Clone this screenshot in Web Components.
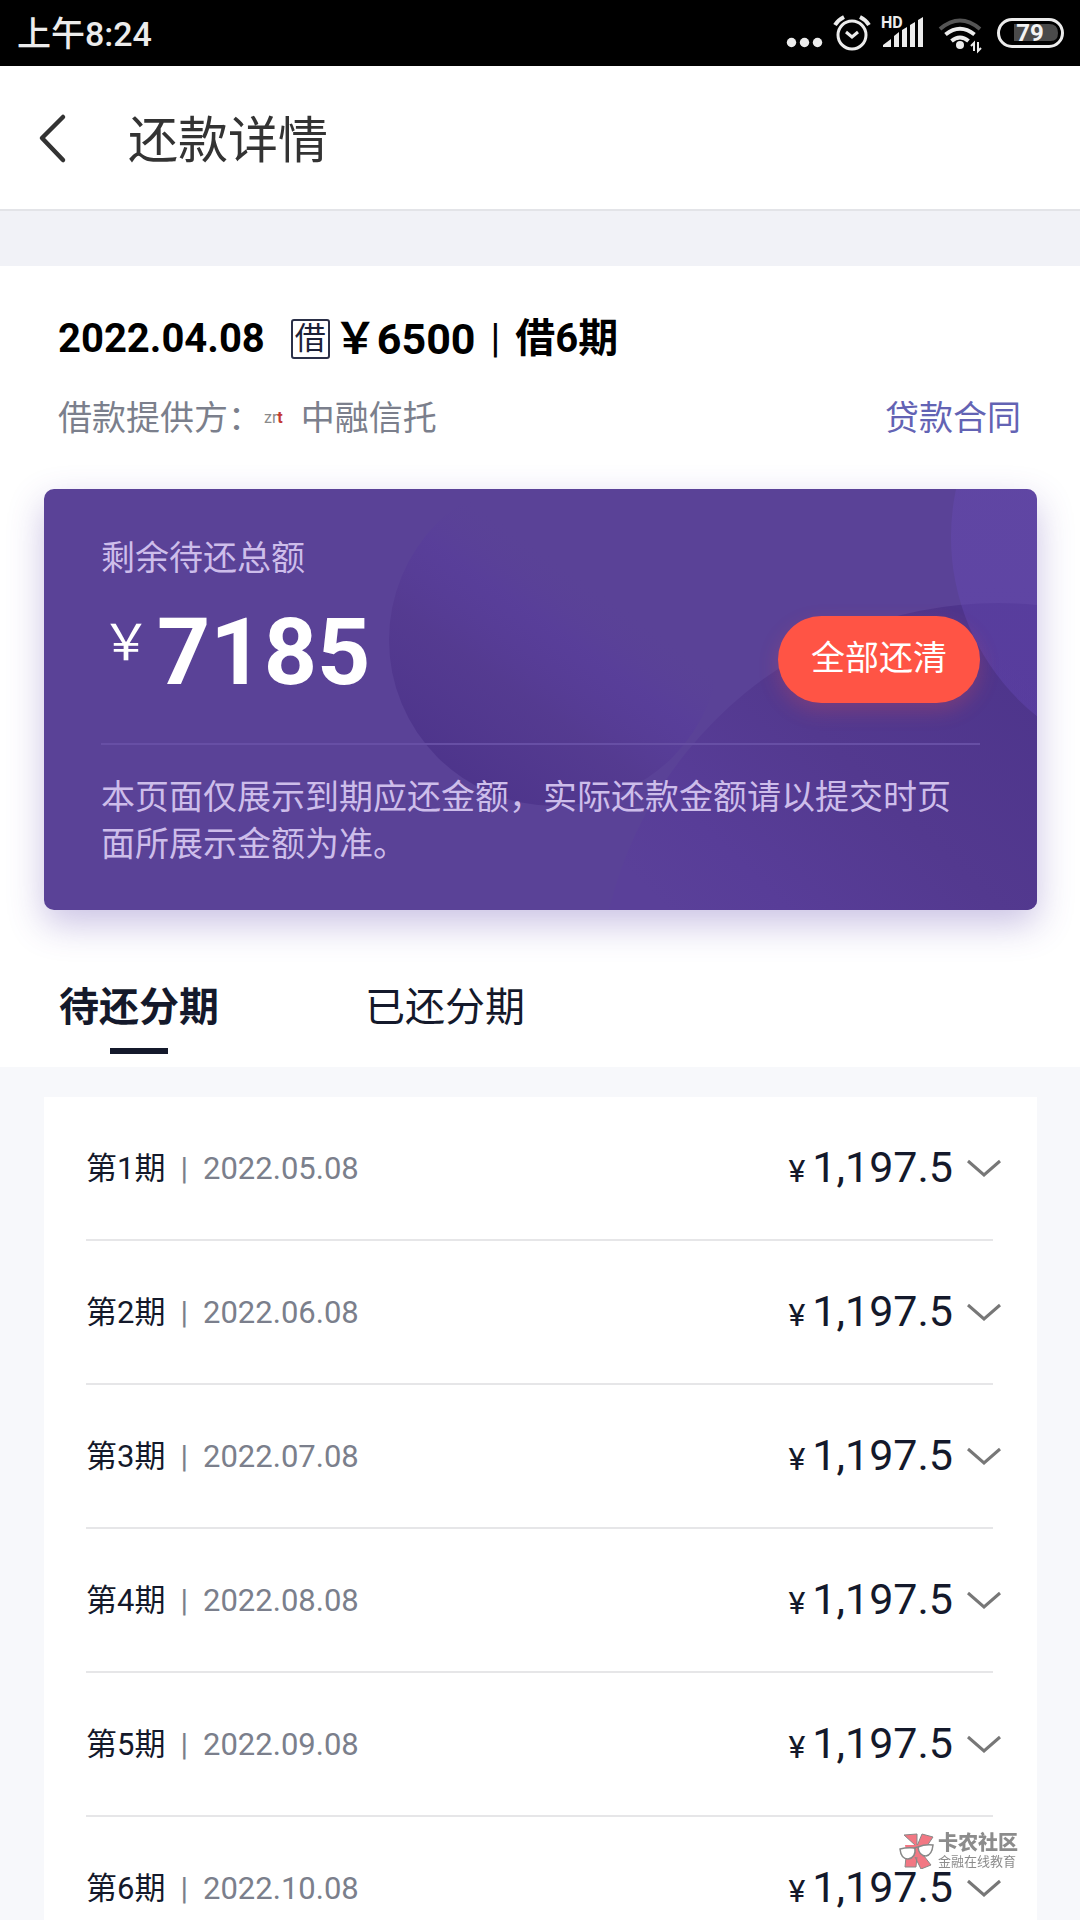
<!DOCTYPE html>
<html lang="zh-CN">
<head>
<meta charset="utf-8">
<meta name="viewport" content="width=device-width, initial-scale=1">
<title>还款详情</title>
<style>
  html, body { margin: 0; height: 100%; }
  body {
    font-family: Roboto, "Noto Sans CJK SC", sans-serif;
    font-size: 34px;
    line-height: 1.4;
    color: #14192b;
    background: #f7f8fb;
    overflow: hidden;
  }
</style>
</head>
<body>
<repay-app></repay-app>

<script>
const define = (name, html, setup) => {
  const template = document.createElement('template');
  template.innerHTML = html;
  customElements.define(name, class extends HTMLElement {
    connectedCallback() {
      if (this.shadowRoot) return;
      const root = this.attachShadow({ mode: 'open' });
      root.append(template.content.cloneNode(true));
      if (setup) setup(root, this);
    }
  });
};

define('status-bar', `
<style>
  :host { display: flex; align-items: center; justify-content: space-between; height: 66px; padding: 0 16px 0 17px; background: #000; color: #ececec; flex: none; }
  time { padding-top: 2px; font-size: 34px; font-weight: 500; line-height: 48px; }
  .icons { display: flex; align-items: center; }
  svg { display: block; }
</style>
<time>上午8:24</time>
<div class="icons">
  <svg width="280" height="66" viewBox="784 0 280 66" fill="none" stroke="#ececec" role="img" aria-label="状态">
    <g fill="#ececec" stroke="none"><circle cx="791.500" cy="42.500" r="4.700"/><circle cx="804.500" cy="42.500" r="4.700"/><circle cx="817.500" cy="42.500" r="4.700"/></g>
    <circle cx="852" cy="35" r="14" stroke-width="3"/>
    <path d="M846 32l6 5 6-5" stroke-width="3"/>
    <path d="M835 25q3-5 9-8M869 25q-3-5-9-8" stroke-width="4"/>
    <text x="881" y="28" fill="#ececec" stroke="none" font-family="Roboto, sans-serif" font-size="16" font-weight="700">HD</text>
    <path fill="#ececec" stroke="none" d="M883 47v-2l8-6v8zM894 47V36l5-4v15zM902 47V30l5-3v20zM910 47V25l5-3v25zM918 47V20l5-3v30z"/>
    <g stroke-width="4">
      <path d="M940 29q20-17 40 0" stroke="#555"/>
      <path d="M945.500 34.500q14.500-11.500 29 0M951.500 41q8.500-7 17 0"/>
    </g>
    <circle cx="960" cy="45" r="4" fill="#ececec" stroke="none"/>
    <path d="M974 51v-8l-3 3M978 42v9l3-3" stroke-width="2"/>
    <rect x="998.500" y="19.500" width="64" height="27" rx="13.500" stroke-width="3"/>
    <path d="M1014 24h35q9 0 9 9t-9 8h-35z" fill="#4a4a4a" stroke="none"/>
    <text x="1030" y="41" text-anchor="middle" fill="#f4f4f4" stroke="none" font-family="Roboto, sans-serif" font-size="24" font-weight="700">79</text>
  </svg>
</div>`);

define('nav-header', `
<style>
  :host { display: flex; align-items: center; gap: 60px; box-sizing: border-box; height: 145px; padding: 2px 36px 0; background: #fff; border-bottom: 2px solid #e3e4e8; color: #333; flex: none; }
  button { display: block; border: 0; padding: 0; background: none; color: inherit; }
  svg { display: block; }
  h1 { margin: 0; padding-top: 4px; font-size: 50px; font-weight: 400; line-height: 70px; }
</style>
<button aria-label="返回"><svg width="32" height="52" viewBox="0 0 32 52" fill="none" stroke="currentColor" stroke-width="4.500" stroke-linecap="round" stroke-linejoin="round"><path d="M27 4L6 25l21 22"/></svg></button>
<h1><slot></slot></h1>`);

define('loan-summary', `
<style>
  :host { display: block; padding: 0 16px 0 14px; }
  .title { display: flex; align-items: center; height: 56px; margin: 0; font-size: 40px; font-weight: 700; line-height: 56px; color: #000; white-space: pre; }
  .tag { box-sizing: border-box; width: 39px; height: 40px; margin: 0 4px 0 26px; border: 2px solid #2b3048; border-radius: 3px; font-size: 31px; font-weight: 400; line-height: 36px; color: #1b2138; display: flex; justify-content: center; }
  .sum { font-size: 43px; }
  .bar { font-weight: 400; padding: 0 15px; }
  .from { display: flex; justify-content: space-between; align-items: center; margin-top: 27px; font-size: 34px; line-height: 48px; color: #7b7f8c; }
  .from span { display: flex; align-items: center; }
  .logo { font-size: 16px; line-height: 20px; padding: 0 18px 0 2px; color: #8a8a8a; }
  .logo b { color: #c43a34; }
  a { color: #6363b4; text-decoration: none; }
</style>
<h2 class="title"><span>2022.04.08</span><span class="tag">借</span><span class="sum">￥6500</span><span class="bar">|</span><span>借6期</span></h2>
<div class="from"><span>借款提供方：<span class="logo">zr<b>t</b></span>中融信托</span><a href="#contract">贷款合同</a></div>`);

define('balance-card', `
<style>
  :host { display: block; position: relative; margin-top: 47px; padding: 45px 57px 42px; border-radius: 10px; background: #5a4297; box-shadow: 0 14px 36px rgba(90, 66, 170, .32); color: #cdbdea; }
  .art { position: absolute; inset: 0; width: 100%; height: 100%; border-radius: 10px; }
  .body { position: relative; }
  .label { font-size: 34px; line-height: 48px; }
  .row { display: flex; align-items: center; justify-content: space-between; height: 106px; margin-top: 18px; }
  .sum { display: flex; align-items: flex-start; color: #fff; }
  .yen { font-size: 50px; line-height: 84px; }
  .num { font-size: 93px; font-weight: 700; line-height: 104px; padding-left: 6px; }
  button { border: 0; height: 87px; margin-top: 12px; padding: 0 33px; border-radius: 44px; background: #ff5445; color: #fff; font: inherit; font-size: 34px; box-shadow: 0 8px 20px rgba(255, 84, 69, .22); }
  hr { border: 0; height: 2px; margin: 37px 0 29px; background: #674fa5; }
  p { margin: 0; font-size: 34px; line-height: 47px; }
</style>
<svg class="art" viewBox="44 489 993 421" preserveAspectRatio="xMaxYMid slice" aria-hidden="true">
  <defs>
    <linearGradient id="a" gradientUnits="userSpaceOnUse" x1="450" y1="780" x2="590" y2="580"><stop offset="0" stop-color="#4d348b"/><stop offset=".45" stop-color="#53398f" stop-opacity=".8"/><stop offset=".75" stop-color="#573b9c" stop-opacity=".5"/><stop offset="1" stop-color="#5a4297" stop-opacity="0"/></linearGradient>
    <linearGradient id="b" gradientUnits="userSpaceOnUse" x1="1010" y1="660" x2="720" y2="960"><stop offset="0" stop-color="#4e358c"/><stop offset=".45" stop-color="#53398f"/><stop offset=".8" stop-color="#583d98"/><stop offset="1" stop-color="#5a4099"/></linearGradient>
    <linearGradient id="c" x1="0" y1="0" x2="0" y2="1"><stop offset="0" stop-color="#6b50b8" stop-opacity=".35"/><stop offset="1" stop-color="#6345b4" stop-opacity=".45"/></linearGradient>
  </defs>
  <circle cx="555" cy="640" r="166" fill="url(#a)"/>
  <circle cx="998" cy="1003" r="400" fill="url(#b)"/>
  <circle cx="1181" cy="537" r="230" fill="url(#c)"/>
</svg>
<div class="body">
  <div class="label">剩余待还总额</div>
  <div class="row"><div class="sum"><span class="yen">￥</span><span class="num">7185</span></div><button>全部还清</button></div>
  <hr>
  <p>本页面仅展示到期应还金额，实际还款金额请以提交时页面所展示金额为准。</p>
</div>`);

define('plan-tabs', `
<style>
  :host { display: flex; gap: 146px; padding: 70px 15px 13px; }
  button { display: flex; flex-direction: column; align-items: center; gap: 12px; border: 0; padding: 0; background: none; font: inherit; font-size: 40px; line-height: 56px; color: #14192b; }
  button::after { content: ""; width: 58px; height: 6px; }
  button[aria-selected=true] { font-weight: 700; }
  button[aria-selected=true]::after { background: #14192b; }
</style>
<div role="tablist" style="display: contents">
  <button role="tab" aria-selected="true">待还分期</button>
  <button role="tab" aria-selected="false">已还分期</button>
</div>`);

define('plan-row', `
<style>
  :host { display: flex; align-items: center; justify-content: space-between; box-sizing: border-box; height: 144px; padding-top: 2px; border-bottom: 2px solid #e6e6e8; }
  .left { display: flex; align-items: baseline; font-size: 31px; line-height: 44px; }
  .bar { padding: 0 15px; color: #7b7f8c; }
  time { color: #7b7f8c; }
  button { display: flex; align-items: center; margin-right: -8px; border: 0; padding: 0; background: none; font: inherit; color: inherit; }
  .amount { display: flex; align-items: baseline; gap: 7px; font-size: 43px; line-height: 60px; }
  small { font-size: 32px; line-height: 60px; }
  svg { display: block; margin-left: 14px; }
</style>
<div class="left"><span class="term"></span><span class="bar">|</span><time></time></div>
<button aria-label="展开"><span class="amount"><small>¥</small><span class="num"></span></span>
<svg width="34" height="20" viewBox="0 0 34 20" fill="none" stroke="#777" stroke-width="3"><path d="M1 2l16 14L33 2"/></svg></button>`,
(root, host) => {
  root.querySelector('.term').textContent = `第${host.getAttribute('term')}期`;
  root.querySelector('time').textContent = host.getAttribute('date');
  root.querySelector('.num').textContent = host.getAttribute('amount');
});

define('plan-list', `
<style>
  :host { display: block; margin: 30px 43px 0 44px; padding: 0 44px 0 42px; background: #fff; }
</style>
<slot></slot>`);

define('community-mark', `
<style>
  :host { position: fixed; right: 62px; bottom: 51px; display: flex; align-items: center; gap: 4px; color: #8c8c8c; }
  svg { display: block; }
  .name { display: block; font-size: 20px; font-weight: 900; line-height: 21px; }
  .sub { display: block; font-size: 13px; line-height: 15px; }
</style>
<svg width="35" height="36" viewBox="0 0 35 36" stroke="#888" stroke-width="1" aria-hidden="true">
  <path fill="#f27783" d="M5 2l13-1v12L23 1l11 3-6 9H17zM7 24l9-3 2 2-1 11H6zM19 22l6 1 7 9-10 4-6-12z"/>
  <path fill="#f27783" stroke="none" d="M6 12h20l-3 12H8z"/>
  <path fill="#fff" stroke-width="1.500" d="M1 16q7-2 15-1 1 10-7 11-7 0-8-10zM19 14q7-3 15-2-1 10-7 11-7 0-8-9z"/>
  <path fill="none" stroke-width="1.500" d="M15 16q2-3 5-1"/>
</svg>
<div><span class="name">卡农社区</span><span class="sub">金融在线教育</span></div>`);

define('repay-app', `
<style>
  :host { display: flex; flex-direction: column; height: 100vh; overflow: hidden; }
  .band { height: 55px; background: #f1f2f7; flex: none; }
  section { padding: 45px 43px 0 44px; background: #fff; flex: none; }
  main { flex: 1; min-height: 0; overflow: hidden; }
</style>
<status-bar></status-bar>
<nav-header>还款详情</nav-header>
<div class="band"></div>
<section>
  <loan-summary></loan-summary>
  <balance-card></balance-card>
  <plan-tabs></plan-tabs>
</section>
<main>
  <plan-list>
    <plan-row term="1" date="2022.05.08" amount="1,197.5"></plan-row>
    <plan-row term="2" date="2022.06.08" amount="1,197.5"></plan-row>
    <plan-row term="3" date="2022.07.08" amount="1,197.5"></plan-row>
    <plan-row term="4" date="2022.08.08" amount="1,197.5"></plan-row>
    <plan-row term="5" date="2022.09.08" amount="1,197.5"></plan-row>
    <plan-row term="6" date="2022.10.08" amount="1,197.5"></plan-row>
  </plan-list>
</main>
<community-mark></community-mark>`);
</script>
</body>
</html>
